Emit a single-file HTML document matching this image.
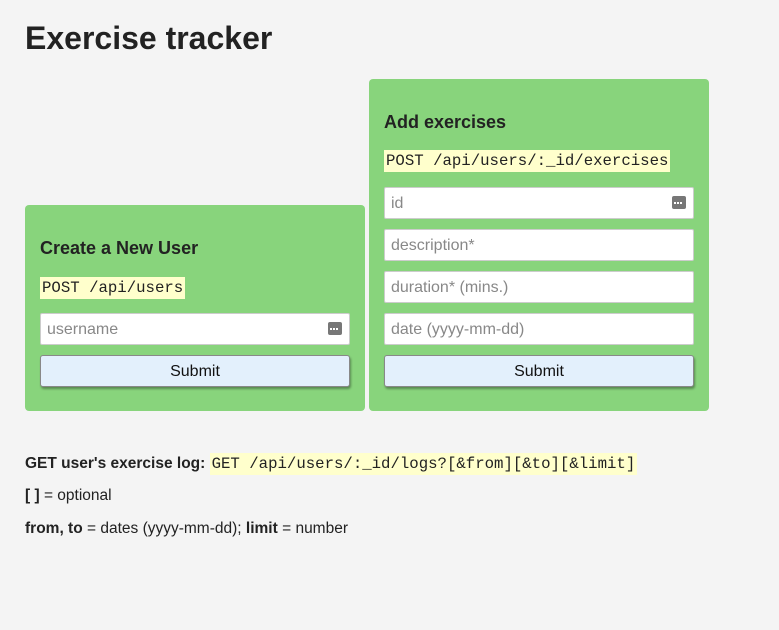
<!DOCTYPE html><html><head><style>
body{margin:0;background:#f4f4f4;font-family:"Liberation Sans",sans-serif;color:#222;width:779px;height:630px;position:relative;overflow:hidden}
h1{position:absolute;left:25px;top:20px;margin:0;font-size:32px;font-weight:bold}
.box{position:absolute;background:#88d47c;border-radius:4px;width:340px}
.a{position:absolute;left:15px}
h3{margin:0;font-size:18px;font-weight:bold;line-height:22px}
code{font-family:"Liberation Mono",monospace;background:#ffffcc;font-size:15.7px;padding:2px 2px;line-height:22px}
.in{position:absolute;left:15px;height:30px;background:#fff;border:1px solid #ccc;border-radius:2px;font-size:16px;color:#888;line-height:32px;padding-left:6px;box-sizing:content-box;width:302px}
.ic{position:absolute;right:7px;top:8px;width:14px;height:13px;background:#777;border-radius:2px}
.ic:after{content:"";position:absolute;left:2px;top:6px;width:8px;height:2px;border-top:2px dotted #fff}
.bt{position:absolute;left:15px;width:308px;height:30px;background:#e3f0fc;border:1px solid #888;border-radius:3px;box-shadow:1px 2px 2px rgba(0,0,0,.35);text-align:center;font-size:16px;line-height:31px;color:#111}
p{position:absolute;left:25px;margin:0;font-size:15.5px;line-height:20px}
</style></head><body>
<h1>Exercise tracker</h1>
<div class="box" style="left:25px;top:205px;height:206px">
<h3 class="a" style="top:32px">Create a New User</h3>
<div class="a" style="top:72px"><code>POST /api/users</code></div>
<div class="in" style="top:108px">username<span class="ic"></span></div>
<div class="bt" style="top:150px">Submit</div>
</div>
<div class="box" style="left:369px;top:79px;height:332px">
<h3 class="a" style="top:32px">Add exercises</h3>
<div class="a" style="top:71px"><code>POST /api/users/:_id/exercises</code></div>
<div class="in" style="top:108px">id<span class="ic"></span></div>
<div class="in" style="top:150px">description*</div>
<div class="in" style="top:192px">duration* (mins.)</div>
<div class="in" style="top:234px">date (yyyy-mm-dd)</div>
<div class="bt" style="top:276px">Submit</div>
</div>
<p style="top:453px"><b>GET user's exercise log:</b> <code>GET /api/users/:_id/logs?[&amp;from][&amp;to][&amp;limit]</code></p>
<p style="top:486px"><b>[ ]</b> = optional</p>
<p style="top:519px"><b>from, to</b> = dates (yyyy-mm-dd); <b>limit</b> = number</p>
</body></html>
